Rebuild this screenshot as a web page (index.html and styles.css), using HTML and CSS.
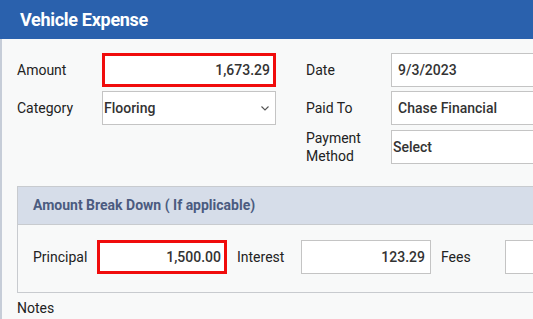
FILE: index.html
```html
<!DOCTYPE html>
<html lang="en">
<head>
<meta charset="UTF-8">
<meta name="viewport" content="width=device-width, initial-scale=1.0">
<title>Vehicle Expense</title>
<link rel="stylesheet" href="styles.css">
</head>
<body>
    <div class="title-bar">Vehicle Expense</div>

    <div class="content">
        <div class="form-grid">
            <div class="form-col">
                <div class="form-row">
                    <label for="amount">Amount</label>
                    <input type="text" id="amount" class="field num invalid" value="1,673.29" readonly>
                </div>
                <div class="form-row">
                    <label for="category">Category</label>
                    <div class="field select" id="category">
                        <span>Flooring</span>
                        <svg class="chevron" width="8" height="5" viewBox="0 0 8 5"><polyline points="0.5,0.5 4,4 7.5,0.5" fill="none" stroke="#555" stroke-width="1.1"/></svg>
                    </div>
                </div>
            </div>
            <div class="form-col">
                <div class="form-row">
                    <label for="date">Date</label>
                    <input type="text" id="date" class="field" value="9/3/2023" readonly>
                </div>
                <div class="form-row">
                    <label for="paidTo">Paid To</label>
                    <input type="text" id="paidTo" class="field" value="Chase Financial" readonly>
                </div>
                <div class="form-row">
                    <label for="method">Payment Method</label>
                    <div class="field select" id="method"><span>Select</span></div>
                </div>
            </div>
        </div>

        <div class="panel">
            <div class="panel-head">Amount Break Down ( If applicable)</div>
            <div class="panel-body">
                <label for="principal">Principal</label>
                <input type="text" id="principal" class="field small num invalid" value="1,500.00" readonly>
                <label for="interest">Interest</label>
                <input type="text" id="interest" class="field small num" value="123.29" readonly>
                <label for="fees">Fees</label>
                <input type="text" id="fees" class="field small num" value="" readonly>
            </div>
        </div>

        <div class="notes-label">Notes</div>
    </div>
</body>
</html>
```

FILE: styles.css
```css
body {
    margin: 0;
    background-color: #f8f9f9;
    font-family: Roboto, 'Liberation Sans', sans-serif;
    font-size: 14px;
    color: #222;
    overflow: hidden;
}

.title-bar {
    height: 39px;
    line-height: 39px;
    padding-left: 20px;
    background-color: #2a61ad;
    color: #fff;
    font-size: 18px;
    font-weight: bold;
    letter-spacing: -0.3px;
}

.content {
    border-left: 2px solid #c6cdd8;
    padding: 14px 0 20px 15px;
}

.form-grid {
    display: flex;
    gap: 30px;
}

.form-col {
    display: flex;
    flex-direction: column;
    gap: 4px;
}

.form-row {
    display: flex;
    align-items: center;
}

.form-row label {
    width: 85px;
    flex-shrink: 0;
    line-height: 18px;
}

#method {
    width: 174px;
}

.field {
    box-sizing: border-box;
    width: 174px;
    height: 34px;
    margin: 0;
    padding: 0 6px;
    border: 1px solid #c4c4c4;
    background: #fff;
    font-family: Roboto, 'Liberation Sans', sans-serif;
    font-size: 14px;
    font-weight: 500;
    color: #333;
    outline: none;
}

.field.num {
    text-align: right;
    padding-right: 5px;
}

.field.invalid {
    border: 3px solid #f00c0c;
    padding-right: 3px;
}

.field.select {
    display: flex;
    align-items: center;
    justify-content: space-between;
    padding: 0 6px 0 1px;
}

.chevron {
    margin-top: 1px;
}

.panel {
    margin-top: 21px;
    width: 620px;
    border: 1px solid #c8cbcf;
}

.panel-head {
    height: 37px;
    line-height: 37px;
    padding-left: 15px;
    background-color: #d6dde9;
    border-bottom: 1px solid #c8cbcf;
    color: #4b5b80;
    font-weight: bold;
}

.panel-body {
    display: flex;
    align-items: center;
    padding: 15px 0 18px 15px;
}

.panel-body label {
    width: 64px;
    flex-shrink: 0;
}

.field.small {
    width: 130px;
    margin-right: 10px;
}

.notes-label {
    margin-top: 7px;
    line-height: 16px;
}
```
